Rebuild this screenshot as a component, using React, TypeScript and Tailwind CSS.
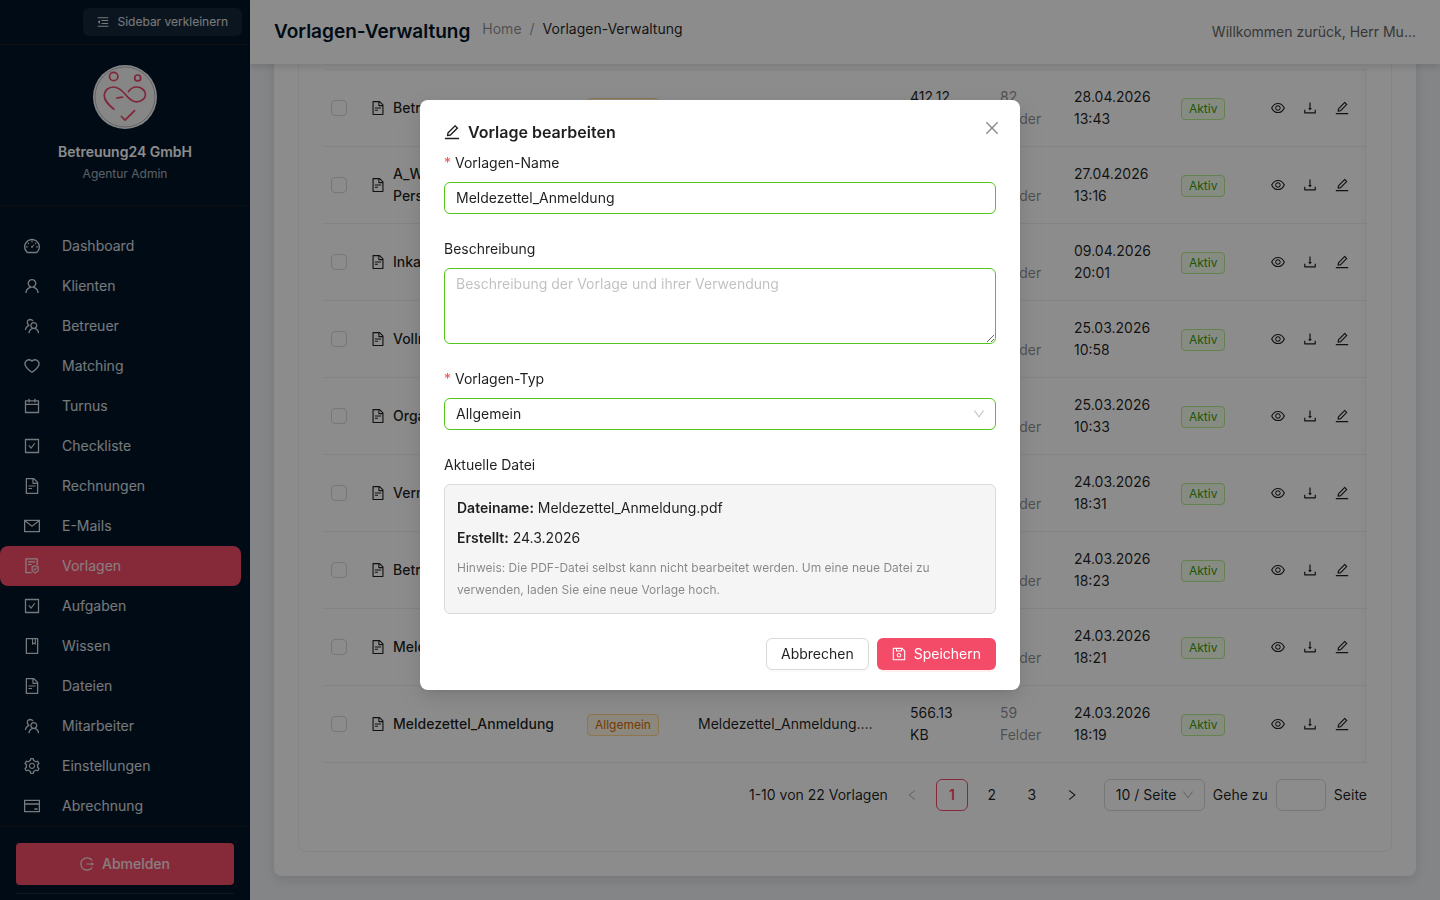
import type { ReactNode } from "react";
import type { IconType } from "react-icons";
import {
  AiOutlineBook,
  AiOutlineCalendar,
  AiOutlineCheckSquare,
  AiOutlineClose,
  AiOutlineCreditCard,
  AiOutlineDashboard,
  AiOutlineDown,
  AiOutlineDownload,
  AiOutlineEdit,
  AiOutlineEye,
  AiOutlineFileProtect,
  AiOutlineFileText,
  AiOutlineHeart,
  AiOutlineLeft,
  AiOutlineLogout,
  AiOutlineMail,
  AiOutlineMenuFold,
  AiOutlineRight,
  AiOutlineSave,
  AiOutlineSetting,
  AiOutlineTeam,
  AiOutlineUser,
} from "react-icons/ai";

type NavItem = { label: string; icon: IconType; active?: boolean };

const NAV_ITEMS: NavItem[] = [
  { label: "Dashboard", icon: AiOutlineDashboard },
  { label: "Klienten", icon: AiOutlineUser },
  { label: "Betreuer", icon: AiOutlineTeam },
  { label: "Matching", icon: AiOutlineHeart },
  { label: "Turnus", icon: AiOutlineCalendar },
  { label: "Checkliste", icon: AiOutlineCheckSquare },
  { label: "Rechnungen", icon: AiOutlineFileText },
  { label: "E-Mails", icon: AiOutlineMail },
  { label: "Vorlagen", icon: AiOutlineFileProtect, active: true },
  { label: "Aufgaben", icon: AiOutlineCheckSquare },
  { label: "Wissen", icon: AiOutlineBook },
  { label: "Dateien", icon: AiOutlineFileText },
  { label: "Mitarbeiter", icon: AiOutlineTeam },
  { label: "Einstellungen", icon: AiOutlineSetting },
  { label: "Abrechnung", icon: AiOutlineCreditCard },
];

type Template = {
  name: string;
  file: string;
  size: string;
  fields: number;
  date: string;
  time: string;
};

const TEMPLATES: Template[] = [
  { name: "Betreuungsvertrag", file: "Betreuungsvertrag.pdf", size: "412.12", fields: 82, date: "28.04.2026", time: "13:43" },
  { name: "A_Werkvertrag Personenbetreuung", file: "A_Werkvertrag.pdf", size: "398.40", fields: 64, date: "27.04.2026", time: "13:16" },
  { name: "Inkassovollmacht", file: "Inkassovollmacht.pdf", size: "120.55", fields: 18, date: "09.04.2026", time: "20:01" },
  { name: "Vollmacht", file: "Vollmacht.pdf", size: "98.21", fields: 12, date: "25.03.2026", time: "10:58" },
  { name: "Organisationsvertrag", file: "Organisationsvertrag.pdf", size: "301.77", fields: 45, date: "25.03.2026", time: "10:33" },
  { name: "Vermittlungsvertrag", file: "Vermittlungsvertrag.pdf", size: "287.09", fields: 39, date: "24.03.2026", time: "18:31" },
  { name: "Betreuerprofil", file: "Betreuerprofil.pdf", size: "210.36", fields: 27, date: "24.03.2026", time: "18:23" },
  { name: "Meldezettel_Abmeldung", file: "Meldezettel_Abmeldung.pdf", size: "566.13", fields: 59, date: "24.03.2026", time: "18:21" },
  { name: "Meldezettel_Anmeldung", file: "Meldezettel_Anmeldung.pdf", size: "566.13", fields: 59, date: "24.03.2026", time: "18:19" },
];

export default function App() {
  return (
    <div className="flex h-screen overflow-hidden bg-[#f0f2f5] font-[Inter,sans-serif] text-sm leading-[22px] text-black/88">
      <Sidebar />
      <div className="flex min-w-0 flex-1 flex-col">
        <Header />
        <main className="flex min-h-0 flex-1 flex-col justify-end overflow-hidden p-6 pt-0">
          <div className="rounded-lg bg-white p-6 shadow-[0_4px_12px_rgba(0,0,0,0.1)]">
            <div className="rounded-lg border border-[#f0f0f0] px-6 pb-10 pt-20">
              <TemplateTable />
              <Pagination />
            </div>
          </div>
        </main>
      </div>
      <EditDialog />
    </div>
  );
}

// The Ant glyphs fill the inner 896 units of their 1024 grid, so crop the margin away.
function Glyph({ icon: Icon, size, className }: { icon: IconType; size: number; className?: string }) {
  return <Icon size={size} viewBox="64 64 896 896" className={className} />;
}

function Sidebar() {
  return (
    <aside className="flex w-[250px] shrink-0 flex-col bg-[#001529] text-white">
      <div className="flex justify-end border-b border-[#1d1d1d] p-2">
        <button className="flex h-7 items-center gap-2 rounded-md bg-white/8 px-[14px] text-xs text-white/85">
          <Glyph icon={AiOutlineMenuFold} size={12} />
          Sidebar verkleinern
        </button>
      </div>

      <div className="flex flex-col items-center border-b border-[#1d1d1d] pb-5 pt-5">
        <Logo />
        <div className="mt-3 font-semibold text-white">Betreuung24 GmbH</div>
        <div className="text-xs leading-[22px] text-white/65">Agentur Admin</div>
      </div>

      <nav className="mt-5 min-h-0 flex-1 overflow-hidden pr-[9px]">
        {NAV_ITEMS.map(({ label, icon, active }) => (
          <a
            key={label}
            href="#"
            className={
              active
                ? "flex h-10 items-center gap-[22px] rounded-lg bg-[#f44b69] pl-6 text-white/85"
                : "flex h-10 items-center gap-[22px] rounded-lg pl-6 text-white/85"
            }
          >
            <Glyph icon={icon} size={16} />
            {label}
          </a>
        ))}
      </nav>

      <div className="border-t border-[#1d1d1d] px-4 pb-[6px] pt-4">
        <button className="flex h-[42px] w-full items-center justify-center gap-2 rounded bg-[#f44b69] font-medium text-white/85">
          <Glyph icon={AiOutlineLogout} size={14} />
          Abmelden
        </button>
        <div className="mt-2 border-t border-white/10" />
      </div>
    </aside>
  );
}

function Logo() {
  return (
    <svg width="64" height="64" viewBox="0 0 64 64" fill="none" aria-hidden="true">
      <circle cx="32" cy="32" r="32" fill="#f4f4f4" />
      <circle cx="32" cy="32" r="30" stroke="#8a8f94" strokeWidth="0.6" />
      <g stroke="#e8466a" strokeWidth="1.7" strokeLinecap="round" strokeLinejoin="round">
        <circle cx="20.7" cy="11.5" r="4.2" />
        <circle cx="44.7" cy="13" r="3" />
        <path d="M21 44.3C16 40 11.3 36 11.3 31C11.3 25.5 15.5 22 20.5 22C25.5 22 28.5 25 32 29C35.5 33 38.500 36.800 43.500 36.800C48.500 36.800 52.500 33.500 52.500 29.500C52.500 25.500 48.500 22 43.500 22C39.800 22 37.300 24 35.500 26.500" />
        <path d="M23.800 33L29.600 32.100" />
        <path d="M28.400 51.500L32 55.200L41.600 45.600" />
      </g>
    </svg>
  );
}

function Header() {
  return (
    <header className="z-10 flex h-16 shrink-0 items-center justify-between bg-white px-6 shadow-[0_2px_8px_rgba(0,0,0,0.15)]">
      <div className="flex items-center gap-3">
        <h1 className="text-[19px] font-semibold text-[#001529]">Vorlagen-Verwaltung</h1>
        <nav className="mb-[6px] flex gap-2">
          <a href="#" className="text-black/45">
            Home
          </a>
          <span className="text-black/45">/</span>
          <span>Vorlagen-Verwaltung</span>
        </nav>
      </div>
      <div className="whitespace-nowrap text-[#666]">Willkommen zurück, Herr Mu...</div>
    </header>
  );
}

function TemplateTable() {
  return (
    <div className="relative">
      <table className="w-full table-fixed text-left">
        <colgroup>
          <col className="w-8" />
          <col className="w-[216px]" />
          <col className="w-[111px]" />
          <col />
          <col className="w-[90px]" />
          <col className="w-[74px]" />
          <col className="w-[107px]" />
          <col className="w-[85px]" />
          <col className="w-[117px]" />
        </colgroup>
        <tbody>
          {TEMPLATES.map((t, i) => (
            <tr key={t.time + i} className="h-[77px] border-b border-[#f0f0f0] first:border-t">
              <td className="text-center">
                <input
                  type="checkbox"
                  aria-label={t.name}
                  className="mx-auto block size-4 appearance-none rounded border border-[#d9d9d9] bg-white"
                />
              </td>
              <td className="px-4">
                <div className="flex items-center gap-2 font-medium">
                  <Glyph icon={AiOutlineFileText} size={14} className="shrink-0" />
                  <span>{t.name}</span>
                </div>
              </td>
              <td className="px-4">
                <Tag className="border-[#ffd591] bg-[#fff7e6] text-[#d46b08]">Allgemein</Tag>
              </td>
              <td className="truncate px-4">{t.file}</td>
              <td className="px-4">
                {t.size}
                <br />
                KB
              </td>
              <td className="pl-4 text-black/45">
                {t.fields}
                <br />
                Felder
              </td>
              <td className="px-4">
                {t.date}
                <br />
                {t.time}
              </td>
              <td className="px-4">
                <Tag className="border-[#b7eb8f] bg-[#f6ffed] text-[#389e0d]">Aktiv</Tag>
              </td>
              <td className="pl-4">
                <div className="flex gap-2">
                  <IconButton label="Ansehen" icon={AiOutlineEye} />
                  <IconButton label="Herunterladen" icon={AiOutlineDownload} />
                  <IconButton label="Bearbeiten" icon={AiOutlineEdit} />
                </div>
              </td>
            </tr>
          ))}
        </tbody>
      </table>
      <div className="pointer-events-none absolute inset-y-0 right-0 w-8 shadow-[inset_-10px_0_8px_-8px_rgba(5,5,5,0.06)]" />
    </div>
  );
}

function Tag({ className, children }: { className: string; children: ReactNode }) {
  return (
    <span className={`inline-block rounded border px-[7px] text-xs leading-5 align-middle ${className}`}>
      {children}
    </span>
  );
}

function IconButton({ label, icon }: { label: string; icon: IconType }) {
  return (
    <button aria-label={label} className="grid size-6 place-items-center rounded">
      <Glyph icon={icon} size={14} />
    </button>
  );
}

function Pagination() {
  return (
    <div className="mt-4 flex items-center justify-end gap-2">
      <span>1-10 von 22 Vorlagen</span>
      <button aria-label="Vorherige Seite" disabled className="grid size-8 place-items-center text-black/25">
        <Glyph icon={AiOutlineLeft} size={12} />
      </button>
      <button className="size-8 rounded-md border border-[#f44b69] bg-white font-semibold text-[#f44b69]">1</button>
      <button className="size-8 rounded-md">2</button>
      <button className="size-8 rounded-md">3</button>
      <button aria-label="Nächste Seite" className="grid size-8 place-items-center">
        <Glyph icon={AiOutlineRight} size={12} />
      </button>
      <div className="relative ml-2">
        <select
          aria-label="Einträge pro Seite"
          className="h-8 w-[101px] appearance-none rounded-md border border-[#d9d9d9] bg-white pl-[11px] pr-6"
        >
          <option>10 / Seite</option>
        </select>
        <Glyph
          icon={AiOutlineDown}
          size={12}
          className="pointer-events-none absolute right-[11px] top-[10px] text-black/25"
        />
      </div>
      <label htmlFor="goto-page">Gehe zu</label>
      <input id="goto-page" className="h-8 w-[50px] rounded-md border border-[#d9d9d9] bg-white px-[11px]" />
      <span>Seite</span>
    </div>
  );
}

function EditDialog() {
  return (
    <div className="fixed inset-0 z-50 flex items-start justify-center bg-black/45 pt-[100px]">
      <div
        role="dialog"
        aria-labelledby="dialog-title"
        className="relative w-full max-w-[600px] rounded-lg bg-white px-6 py-5 shadow-[0_6px_16px_0_rgba(0,0,0,0.08),0_3px_6px_-4px_rgba(0,0,0,0.12),0_9px_28px_8px_rgba(0,0,0,0.05)]"
      >
        <button aria-label="Schließen" className="absolute right-3 top-3 grid size-8 place-items-center text-black/45">
          <Glyph icon={AiOutlineClose} size={16} />
        </button>
        <h2 id="dialog-title" className="mb-2 flex items-center gap-2 text-base font-semibold leading-6">
          <Glyph icon={AiOutlineEdit} size={16} />
          Vorlage bearbeiten
        </h2>

        <form className="flex flex-col gap-6">
          <div className="flex flex-col gap-2">
            <FieldLabel htmlFor="template-name" required>
              Vorlagen-Name
            </FieldLabel>
            <input
              id="template-name"
              defaultValue="Meldezettel_Anmeldung"
              className="block w-full rounded-md border border-[#52c41a] px-[11px] py-1 outline-none"
            />
          </div>

          <div className="flex flex-col gap-2">
            <FieldLabel htmlFor="template-description">Beschreibung</FieldLabel>
            <textarea
              id="template-description"
              rows={3}
              placeholder="Beschreibung der Vorlage und ihrer Verwendung"
              className="block w-full resize-y rounded-md border border-[#52c41a] px-[11px] py-1 outline-none placeholder:text-black/25"
            />
          </div>

          <div className="flex flex-col gap-2">
            <FieldLabel htmlFor="template-type" required>
              Vorlagen-Typ
            </FieldLabel>
            <div className="relative">
              <select
                id="template-type"
                className="block h-8 w-full appearance-none rounded-md border border-[#52c41a] bg-white px-[11px] outline-none"
              >
                <option>Allgemein</option>
              </select>
              <Glyph
                icon={AiOutlineDown}
                size={12}
                className="pointer-events-none absolute right-[11px] top-[10px] text-black/25"
              />
            </div>
          </div>

          <div className="flex flex-col gap-2">
            <span>Aktuelle Datei</span>
            <div className="flex flex-col gap-2 rounded-md border border-[#d9d9d9] bg-[#f5f5f5] p-3">
              <p>
                <strong className="font-semibold">Dateiname:</strong> Meldezettel_Anmeldung.pdf
              </p>
              <p>
                <strong className="font-semibold">Erstellt:</strong> 24.3.2026
              </p>
              <p className="text-xs leading-[22px] text-black/45">
                Hinweis: Die PDF-Datei selbst kann nicht bearbeitet werden. Um eine neue Datei zu verwenden, laden Sie
                eine neue Vorlage hoch.
              </p>
            </div>
          </div>

          <div className="flex justify-end gap-2">
            <button
              type="button"
              className="h-8 rounded-md border border-[#d9d9d9] bg-white px-[14px] shadow-[0_2px_0_rgba(0,0,0,0.02)]"
            >
              Abbrechen
            </button>
            <button
              type="submit"
              className="flex h-8 items-center gap-2 rounded-md bg-[#f44b69] px-[15px] text-white shadow-[0_2px_0_rgba(255,5,5,0.06)]"
            >
              <Glyph icon={AiOutlineSave} size={14} />
              Speichern
            </button>
          </div>
        </form>
      </div>
    </div>
  );
}

function FieldLabel({
  htmlFor,
  required,
  children,
}: {
  htmlFor: string;
  required?: boolean;
  children: ReactNode;
}) {
  return (
    <label htmlFor={htmlFor} className="flex gap-1">
      {required && <span className="text-[#ff4d4f]">*</span>}
      {children}
    </label>
  );
}
